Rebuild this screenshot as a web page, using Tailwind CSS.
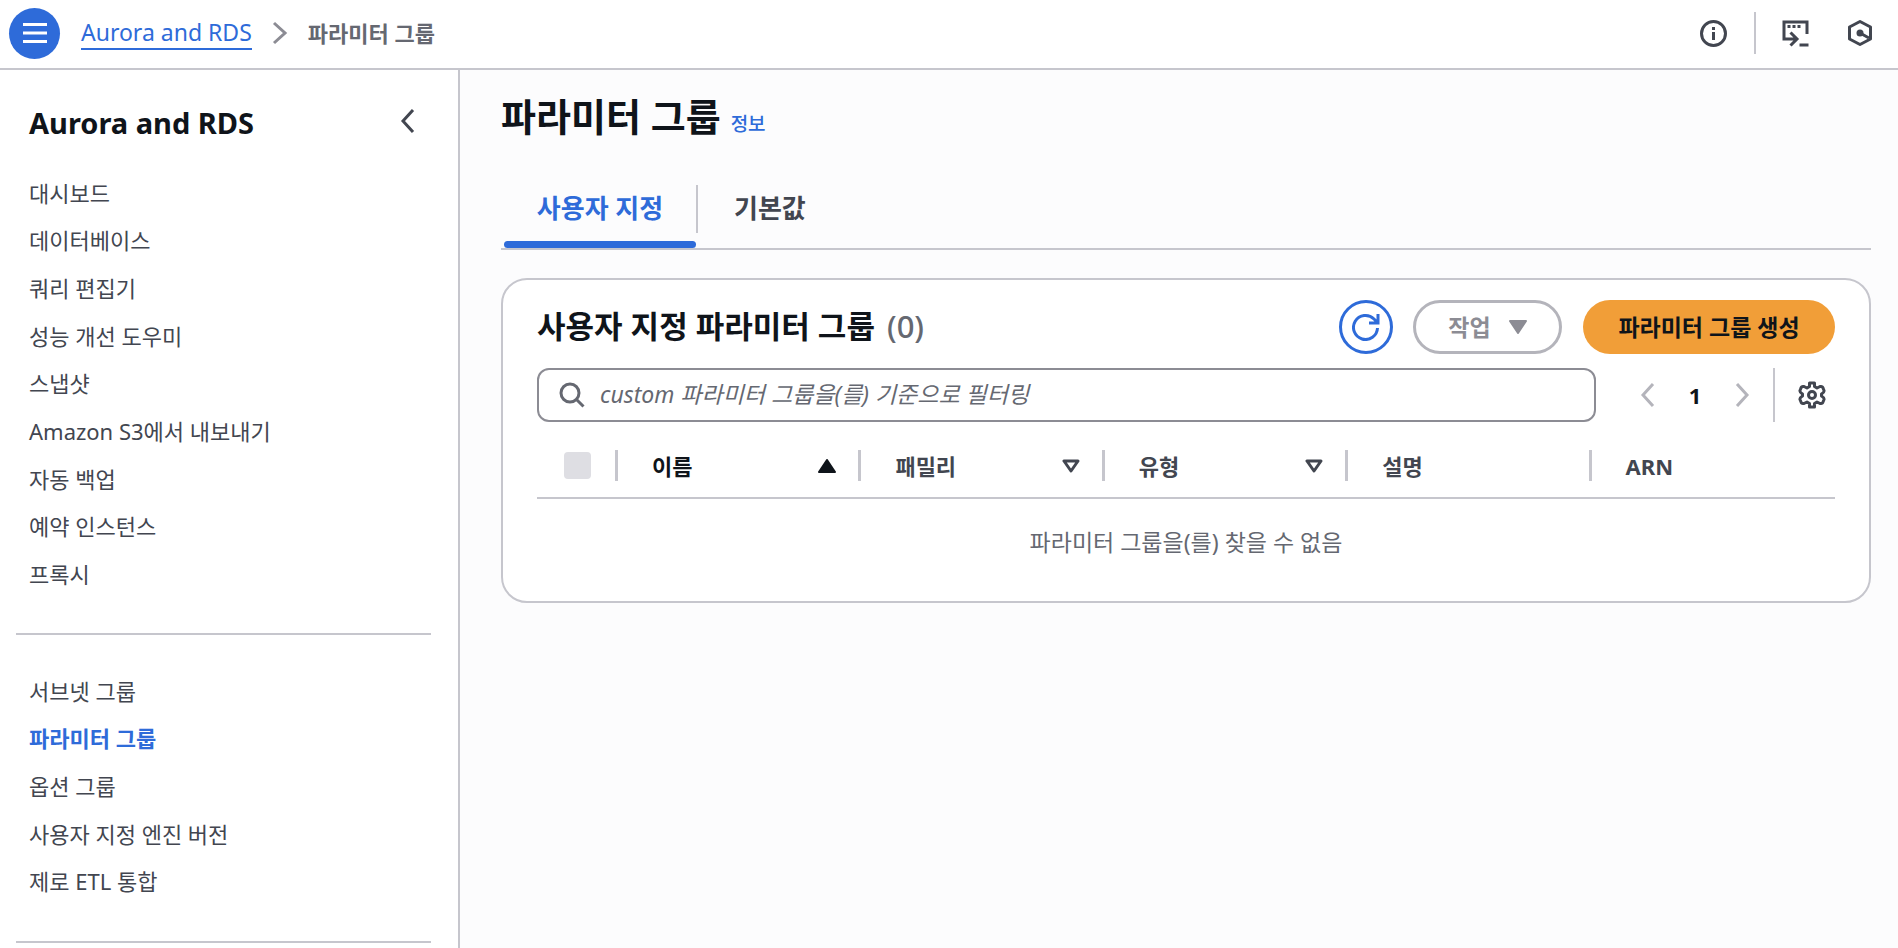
<!DOCTYPE html>
<html lang="ko">
<head>
  <meta charset="UTF-8" />
  <meta name="viewport" content="width=device-width, initial-scale=1.0"/>
  <title>파라미터 그룹 | Aurora and RDS</title>
  <script src="https://cdn.jsdelivr.net/npm/@tailwindcss/browser@4"></script>
</head>
<body class="flex h-screen flex-col overflow-hidden bg-white font-['Noto_Sans','Noto_Sans_CJK_KR',sans-serif] text-[22px] leading-7 text-[#424650]">

  <!-- Top bar -->
  <header class="flex h-[70px] shrink-0 items-center border-b-2 border-[#c6c6cd] pr-[25px] pb-[2px] pl-[9px]">
    <button type="button" aria-label="메뉴" class="flex size-[51px] items-center justify-center rounded-full bg-[#2e6bd9]">
      <svg class="size-6" viewBox="0 0 24 24" fill="none" stroke="white" stroke-width="3"><path d="M0 3.500h24M0 12h24M0 20.500h24"/></svg>
    </button>
    <nav aria-label="breadcrumb" class="ml-[21px] flex items-center">
      <a href="#" class="border-b-2 border-[#2e6bd9] text-[23px] leading-8 text-[#2e6bd9]">Aurora and RDS</a>
      <svg class="mx-5 h-6 w-4" viewBox="0 0 16 24" fill="none" stroke="#8c8c94" stroke-width="3"><path d="M2 2l11 10L2 22"/></svg>
      <span class="font-bold text-[#656871]">파라미터 그룹</span>
    </nav>
    <div class="ml-auto flex items-center">
      <button type="button" aria-label="정보">
        <svg class="size-[27px]" viewBox="0 0 27 27" fill="none" stroke="#424650" stroke-width="3"><circle cx="13.500" cy="13.500" r="12"/><path d="M13.500 12v8M13.500 7v3"/></svg>
      </button>
      <span class="mr-[26px] ml-[27px] h-[42px] w-[2px] bg-[#c6c6cd]"></span>
      <button type="button" aria-label="CloudShell">
        <svg class="size-[27px]" viewBox="0 0 27 27" fill="none" stroke="#424650" stroke-width="3"><path d="M25 14V2H2v17h12M8.500 12.500l6.500 6.500-6.500 6.500M17.500 25h9M5.500 6.500h3M10.500 6.500h3M15.500 6.500h3"/></svg>
      </button>
      <button type="button" aria-label="Amazon Q" class="ml-[38px]">
        <svg class="size-[26px]" viewBox="0 0 26 26" fill="none" stroke="#424650" stroke-width="3" stroke-linejoin="round"><path d="M13 1.500L23.500 7v12L13 24.500L2.500 19V7z"/><circle cx="13" cy="13" r="3.500" fill="#424650" stroke="none"/><path d="M13 13l9 5"/></svg>
      </button>
    </div>
  </header>

  <div class="flex min-h-0 flex-1">
    <!-- Side navigation -->
    <aside class="w-[460px] shrink-0 overflow-hidden border-r-2 border-[#c6c6cd] pr-[27px] pl-4">
      <div class="flex h-[99px] items-center justify-between pt-[2px] pr-[15px] pl-[13px]">
        <h2 class="pt-1 text-[29px] font-bold text-[#0f141a]">Aurora and RDS</h2>
        <button type="button" aria-label="탐색 닫기">
          <svg class="h-6 w-4" viewBox="0 0 16 24" fill="none" stroke="#424650" stroke-width="3"><path d="M13 1L3 12l10 11"/></svg>
        </button>
      </div>
      <ul class="grid h-[429px] auto-rows-fr items-center pl-[13px]">
        <li><a href="#">대시보드</a></li>
        <li><a href="#">데이터베이스</a></li>
        <li><a href="#">쿼리 편집기</a></li>
        <li><a href="#">성능 개선 도우미</a></li>
        <li><a href="#">스냅샷</a></li>
        <li><a href="#">Amazon S3에서 내보내기</a></li>
        <li><a href="#">자동 백업</a></li>
        <li><a href="#">예약 인스턴스</a></li>
        <li><a href="#">프록시</a></li>
      </ul>
      <hr class="mt-[35px] mb-8 border-t-2 border-[#c6c6cd]" />
      <ul class="grid h-[238px] auto-rows-fr items-center pl-[13px]">
        <li><a href="#">서브넷 그룹</a></li>
        <li><a href="#" aria-current="page" class="font-bold text-[#2e6bd9]">파라미터 그룹</a></li>
        <li><a href="#">옵션 그룹</a></li>
        <li><a href="#">사용자 지정 엔진 버전</a></li>
        <li><a href="#">제로 ETL 통합</a></li>
      </ul>
      <hr class="mt-9 border-t-2 border-[#c6c6cd]" />
    </aside>

    <main class="min-w-0 flex-1 bg-[#fcfcfd] pt-5 pr-[27px] pl-[41px]">
      <div class="flex items-baseline gap-[10px]">
        <h1 class="text-[38px] leading-[52px] font-bold text-[#0f141a]">파라미터 그룹</h1>
        <a href="#" class="text-[19px] font-medium text-[#2e6bd9]">정보</a>
      </div>

      <!-- Tabs -->
      <div role="tablist" class="mt-[34px] flex h-[74px] items-stretch border-b-2 border-[#c6c6cd] pl-[3px] text-[26px] font-bold">
        <button type="button" role="tab" aria-selected="true" class="flex w-[192px] flex-col text-[#2e6bd9]">
          <span class="flex w-full flex-1 items-center justify-center pb-[2px]">사용자 지정</span>
          <span class="h-[7px] w-full rounded-full bg-[#2e6bd9]"></span>
        </button>
        <span class="mt-[9px] h-12 w-[2px] bg-[#c6c6cd]"></span>
        <button type="button" role="tab" aria-selected="false" class="mb-[7px] px-9 pb-[2px]">기본값</button>
      </div>

      <section class="mt-7 rounded-[26px] border-2 border-[#c6c6cd] bg-white px-[34px] pt-5 pb-[17px]">
        <div class="flex items-center">
          <h2 class="pb-[2px] text-[31px] leading-10 font-bold text-[#0f141a]">사용자 지정 파라미터 그룹 <span class="ml-1 font-medium text-[#656871]">(0)</span></h2>
          <div class="ml-auto flex h-[54px] items-stretch text-[23px] font-bold">
            <button type="button" aria-label="새로 고침" class="flex w-[54px] items-center justify-center rounded-full border-3 border-[#2e6bd9]">
              <svg class="size-7" viewBox="0 0 28 28" fill="none" stroke="#2e6bd9" stroke-width="3"><path d="M25.500 15a12 12 0 1 1-3.500-9L25.500 9.500M26 1v9h-9"/></svg>
            </button>
            <button type="button" disabled class="ml-5 flex w-[149px] items-center justify-center gap-[18px] rounded-full border-3 border-[#b4b4bb] text-[#8c8c94]">
              작업
              <svg class="h-[14px] w-[18px]" viewBox="0 0 18 14" fill="#8c8c94" stroke="#8c8c94" stroke-width="2" stroke-linejoin="round"><path d="M1 1h16L9 13z"/></svg>
            </button>
            <button type="button" class="ml-[21px] w-[252px] rounded-full bg-[#f19e38] text-[#0f141a]">파라미터 그룹 생성</button>
          </div>
        </div>

        <div class="mt-[14px] flex h-[54px] items-center">
          <label class="flex h-full flex-1 items-center rounded-xl border-2 border-[#8c8c94] px-5">
            <svg class="size-[26px] shrink-0" viewBox="0 0 26 26" fill="none" stroke="#656871" stroke-width="3"><circle cx="11" cy="11" r="9"/><path d="M17.500 17.500l7 7"/></svg>
            <input type="text" aria-label="필터" placeholder="custom 파라미터 그룹을(를) 기준으로 필터링" class="ml-[15px] min-w-0 flex-1 pb-[2px] text-[23px] italic outline-none placeholder:text-[#656871]" />
          </label>
          <button type="button" disabled aria-label="이전 페이지" class="ml-11">
            <svg class="h-6 w-4" viewBox="0 0 16 24" fill="none" stroke="#b4b4bb" stroke-width="3"><path d="M13 1L3 12l10 11"/></svg>
          </button>
          <button type="button" class="w-[78px] font-bold text-[#0f141a]">1</button>
          <button type="button" disabled aria-label="다음 페이지">
            <svg class="h-6 w-4" viewBox="0 0 16 24" fill="none" stroke="#b4b4bb" stroke-width="3"><path d="M3 1l10 11L3 23"/></svg>
          </button>
          <span class="mx-[23px] h-full w-[2px] bg-[#c6c6cd]"></span>
          <button type="button" aria-label="기본 설정" class="mr-[9px]">
            <svg class="size-7" viewBox="0 0 28 28" fill="none" stroke="#424650" stroke-width="3" stroke-linejoin="round"><path d="M11.500 2h5v3.500L19 7l3-1.500q2.500-.5 3 1.500l1 2.500q.5 1.500-2.500 3.500v2q3 2 2.500 3.500L25 21q-.5 2-3 1.500L19 21l-2.500 1.500V26h-5v-3.500L9 21l-3 1.500q-2.500.5-3-1.500l-1-2.500Q1.500 17 4.500 15v-2Q1.500 11 2 9.500L3 7q.5-2 3-1.500L9 7l2.500-1.500z"/><circle cx="14" cy="14" r="3.500"/></svg>
          </button>
        </div>

        <table class="w-full table-fixed text-left">
          <thead>
            <tr class="h-[76px] border-b-2 border-[#c6c6cd]">
              <th class="w-[81px] p-0 pt-3">
                <div class="flex h-[31px] items-center justify-end border-r-3 border-[#c6c6cd] pr-6">
                  <input type="checkbox" disabled aria-label="모두 선택" class="size-[27px] appearance-none rounded bg-[#dedee3]" />
                </div>
              </th>
              <th class="p-0 pt-3 text-[#0f141a]">
                <div class="flex h-[31px] items-center justify-between border-r-3 border-[#c6c6cd] pr-[22px] pl-[34px]">
                  이름
                  <svg class="h-[14px] w-[18px]" viewBox="0 0 18 14" fill="#0f141a" stroke="#0f141a" stroke-width="2" stroke-linejoin="round"><path d="M1 13h16L9 1z"/></svg>
                </div>
              </th>
              <th class="p-0 pt-3">
                <div class="flex h-[31px] items-center justify-between border-r-3 border-[#c6c6cd] pr-[22px] pl-[34px]">
                  패밀리
                  <svg class="h-[14px] w-[18px]" viewBox="0 0 18 14" fill="none" stroke="#424650" stroke-width="3" stroke-linejoin="round"><path d="M2 2h14L9 12z"/></svg>
                </div>
              </th>
              <th class="p-0 pt-3">
                <div class="flex h-[31px] items-center justify-between border-r-3 border-[#c6c6cd] pr-[22px] pl-[34px]">
                  유형
                  <svg class="h-[14px] w-[18px]" viewBox="0 0 18 14" fill="none" stroke="#424650" stroke-width="3" stroke-linejoin="round"><path d="M2 2h14L9 12z"/></svg>
                </div>
              </th>
              <th class="p-0 pt-3">
                <div class="flex h-[31px] items-center border-r-3 border-[#c6c6cd] pl-[34px]">설명</div>
              </th>
              <th class="p-0 pt-3">
                <div class="flex h-[31px] items-center pl-[34px]">ARN</div>
              </th>
            </tr>
          </thead>
          <tbody>
            <tr>
              <td colspan="6" class="h-[86px] p-0 text-center text-[23px] text-[#656871]">파라미터 그룹을(를) 찾을 수 없음</td>
            </tr>
          </tbody>
        </table>
      </section>
    </main>
  </div>
</body>
</html>
